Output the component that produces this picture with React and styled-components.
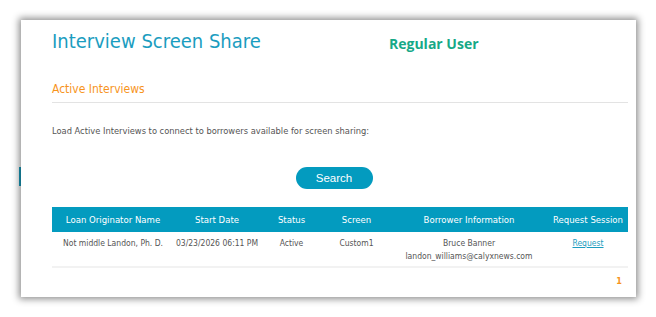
import styled, { createGlobalStyle } from 'styled-components';

const GlobalStyle = createGlobalStyle`
  html, body {
    margin: 0;
    padding: 0;
    background: #ffffff;
  }
  body {
    font-family: "DejaVu Sans Condensed", "DejaVu Sans", Verdana, sans-serif;
  }
`;

const Page = styled.div`
  position: relative;
  width: 656px;
  height: 317px;
  padding: 20px 0 0 21px;
  box-sizing: border-box;
  overflow: hidden;
`;

const SideTab = styled.div`
  position: absolute;
  left: 19px;
  top: 167px;
  width: 2px;
  height: 19px;
  background: #1a9fc0;
`;

const Card = styled.div`
  position: relative;
  width: 615px;
  height: 277px;
  box-sizing: border-box;
  padding: 8px 8px 0 31px;
  background: #ffffff;
  box-shadow: 0 0 7px 2px rgba(0, 0, 0, 0.45);
  display: flex;
  flex-direction: column;
`;

const Header = styled.div`
  display: grid;
  grid-template-columns: 337px auto;
  align-items: center;
  height: 26px;
`;

const Title = styled.h1`
  margin: 0;
  font-weight: normal;
  font-size: 20px;
  line-height: 26px;
  color: #1b9dc0;
`;

const UserBadge = styled.div`
  font-family: "Open Sans", sans-serif;
  font-weight: 700;
  font-size: 14px;
  line-height: 18px;
  color: #16a987;
  padding-top: 6px;
`;

const SectionTitle = styled.div`
  margin-top: 28px;
  padding-bottom: 6px;
  border-bottom: 1px solid #e3e3e3;
  font-size: 12px;
  line-height: 14px;
  color: #f7941d;
`;

const Intro = styled.p`
  margin: 22px 0 0;
  font-size: 9.25px;
  line-height: 12px;
  color: #555555;
`;

const ButtonRow = styled.div`
  display: flex;
  justify-content: center;
  margin-top: 30px;
`;

const SearchButton = styled.button`
  width: 77px;
  height: 22px;
  border: none;
  border-radius: 11px;
  background: #039bbf;
  color: #ffffff;
  font-family: "Liberation Sans", Arial, sans-serif;
  font-size: 11.5px;
  padding: 0;
  margin-left: -12px;
`;

const Table = styled.table`
  margin-top: 18px;
  width: 576px;
  border-collapse: collapse;
  table-layout: fixed;
`;

const HeadCell = styled.th`
  height: 25px;
  padding: 0;
  background: #039bbf;
  color: #ffffff;
  font-weight: normal;
  font-size: 9.5px;
  text-align: center;
  white-space: nowrap;
  width: ${p => p.$w}px;
`;

const Row = styled.tr`
  border-bottom: 2px solid #f2f2f2;
`;

const Cell = styled.td`
  height: 29px;
  padding: 5px 0 0;
  vertical-align: top;
  text-align: center;
  font-size: 8.5px;
  line-height: 13px;
  white-space: nowrap;
  color: #555555;
`;

const RequestLink = styled.a`
  color: #1b9dc0;
  text-decoration: underline;
`;

const Pager = styled.div`
  width: 576px;
  display: flex;
  justify-content: flex-end;
  margin-top: 7px;
  font-size: 9px;
  line-height: 12px;
  font-weight: bold;
  color: #f7941d;
`;

const PageNum = styled.span`
  margin-right: 6px;
`;

const columns = [
  { label: 'Loan Originator Name', w: 122 },
  { label: 'Start Date', w: 86 },
  { label: 'Status', w: 63 },
  { label: 'Screen', w: 67 },
  { label: 'Borrower Information', w: 158 },
  { label: 'Request Session', w: 80 },
];

export default function App() {
  return (
    <Page>
      <GlobalStyle />
      <SideTab />
      <Card>
        <Header>
          <Title>Interview Screen Share</Title>
          <UserBadge>Regular User</UserBadge>
        </Header>
        <SectionTitle>Active Interviews</SectionTitle>
        <Intro>Load Active Interviews to connect to borrowers available for screen sharing:</Intro>
        <ButtonRow>
          <SearchButton>Search</SearchButton>
        </ButtonRow>
        <Table>
          <thead>
            <tr>
              {columns.map(c => (
                <HeadCell key={c.label} $w={c.w}>
                  {c.label}
                </HeadCell>
              ))}
            </tr>
          </thead>
          <tbody>
            <Row>
              <Cell>Not middle Landon, Ph. D.</Cell>
              <Cell>03/23/2026 06:11 PM</Cell>
              <Cell>Active</Cell>
              <Cell>Custom1</Cell>
              <Cell>
                Bruce Banner
                <br />
                landon_williams@calyxnews.com
              </Cell>
              <Cell>
                <RequestLink href="#">Request</RequestLink>
              </Cell>
            </Row>
          </tbody>
        </Table>
        <Pager>
          <PageNum>1</PageNum>
        </Pager>
      </Card>
    </Page>
  );
}
